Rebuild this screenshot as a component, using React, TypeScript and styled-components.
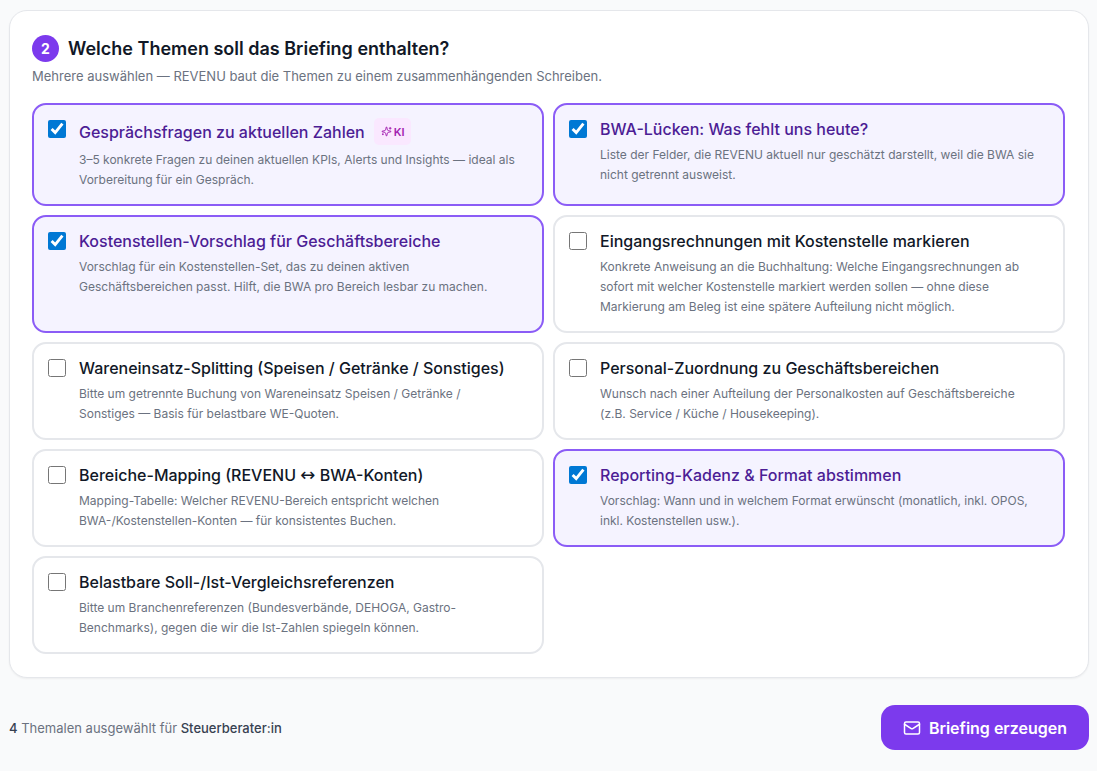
import React, { Fragment, useState } from "react";
import styled, { createGlobalStyle } from "styled-components";

const GlobalStyle = createGlobalStyle`
  *, *::before, *::after { box-sizing: border-box; }
  body {
    margin: 0;
    background: #f9fafb;
    color: #111827;
    font-family: Inter, "Liberation Sans", sans-serif;
  }
`;

const Page = styled.main`
  padding: 10px 8px 21px 9px;
`;

const Panel = styled.section`
  padding: 24px 23px 23px 22px;
  background: #ffffff;
  border: 1px solid #e5e7eb;
  border-radius: 18px;
  box-shadow: 0 1px 2px rgba(0, 0, 0, 0.05);
`;

const PanelHeader = styled.div`
  display: flex;
  align-items: center;
  gap: 9px;
`;

const StepNumber = styled.span`
  display: flex;
  align-items: center;
  justify-content: center;
  width: 27px;
  height: 27px;
  border-radius: 50%;
  background: #7c3aed;
  color: #ffffff;
  font-size: 14px;
  font-weight: 700;
`;

const PanelTitle = styled.h2`
  margin: 0;
  font-size: 18px;
  line-height: 26px;
  font-weight: 600;
`;

const PanelHint = styled.p`
  margin: 4px 0 17px;
  color: #6b7280;
  font-size: 13px;
  line-height: 20px;
`;

const TopicGrid = styled.div`
  display: grid;
  grid-template-columns: repeat(2, minmax(0, 1fr));
  gap: 9px;
`;

const TopicCard = styled.label<{ $selected: boolean }>`
  display: flex;
  align-items: flex-start;
  gap: 13px;
  padding: 13px 14px 14px;
  border: 2px solid ${(p) => (p.$selected ? "#8b5cf6" : "#e5e7eb")};
  border-radius: 14px;
  background: ${(p) => (p.$selected ? "#f5f3ff" : "#ffffff")};
  cursor: pointer;
`;

const Checkbox = styled.input`
  flex: none;
  width: 18px;
  height: 18px;
  margin: 2px 0 0;
  accent-color: #0078d4;
`;

const TopicBody = styled.div`
  flex: 1;
  min-width: 0;
`;

const TopicTitle = styled.div<{ $selected: boolean }>`
  display: flex;
  align-items: center;
  gap: 9px;
  font-size: 16px;
  line-height: 22px;
  font-weight: 500;
  color: ${(p) => (p.$selected ? "#4c1d95" : "#111827")};
`;

const Arrow = styled.span`
  font-family: "DejaVu Sans", sans-serif;
  font-size: 18px;
  font-weight: 400;
  line-height: 1;
`;

const TopicText = styled.p`
  margin: 5px 0 0;
  padding-right: 12px;
  color: #6b7280;
  font-size: 12px;
  line-height: 20px;
`;

const AiBadge = styled.span`
  display: flex;
  align-items: center;
  gap: 2px;
  height: 27px;
  padding: 0 6px 0 7px;
  border-radius: 5px;
  background: #fae8ff;
  color: #a21caf;
  font-size: 11px;
  font-weight: 600;
`;

const Footer = styled.footer`
  display: flex;
  align-items: center;
  justify-content: space-between;
  margin-top: 27px;
`;

const Summary = styled.p`
  margin: 0;
  color: #6b7280;
  font-size: 13px;
  line-height: 20px;
`;

const Strong = styled.strong`
  color: #374151;
  font-weight: 500;
`;

const SubmitButton = styled.button`
  display: flex;
  align-items: center;
  gap: 8px;
  height: 45px;
  padding: 0 22px;
  border: 0;
  border-radius: 14px;
  background: #7c3aed;
  color: #ffffff;
  font: 600 16px/24px Inter, "Liberation Sans", sans-serif;
  cursor: pointer;
`;

const SparkIcon = () => (
  <svg width="11" height="11" viewBox="0 0 24 24" fill="none" stroke="currentColor" strokeWidth="2" strokeLinecap="round" strokeLinejoin="round" aria-hidden="true">
    <path d="M9.937 15.5A2 2 0 0 0 8.5 14.063l-6.135-1.582a.5.5 0 0 1 0-.962L8.5 9.936A2 2 0 0 0 9.937 8.5l1.582-6.135a.5.5 0 0 1 .963 0L14.063 8.5A2 2 0 0 0 15.5 9.937l6.135 1.581a.5.5 0 0 1 0 .964L15.5 14.063a2 2 0 0 0-1.437 1.437l-1.582 6.135a.5.5 0 0 1-.963 0z" />
    <path d="M20 3v4M22 5h-4M4 17v2M5 18H3" />
  </svg>
);

const MailIcon = () => (
  <svg width="18" height="18" viewBox="0 0 24 24" fill="none" stroke="currentColor" strokeWidth="2" strokeLinecap="round" strokeLinejoin="round" aria-hidden="true">
    <rect x="2" y="4" width="20" height="16" rx="2" />
    <path d="m22 7-8.97 5.7a1.94 1.94 0 0 1-2.06 0L2 7" />
  </svg>
);

interface Topic {
  id: string;
  title: string;
  text: string;
  ai?: boolean;
}

const topics: Topic[] = [
  { id: "fragen", title: "Gesprächsfragen zu aktuellen Zahlen", text: "3–5 konkrete Fragen zu deinen aktuellen KPIs, Alerts und Insights — ideal als Vorbereitung für ein Gespräch.", ai: true },
  { id: "luecken", title: "BWA-Lücken: Was fehlt uns heute?", text: "Liste der Felder, die REVENU aktuell nur geschätzt darstellt, weil die BWA sie nicht getrennt ausweist." },
  { id: "kostenstellen", title: "Kostenstellen-Vorschlag für Geschäftsbereiche", text: "Vorschlag für ein Kostenstellen-Set, das zu deinen aktiven Geschäftsbereichen passt. Hilft, die BWA pro Bereich lesbar zu machen." },
  { id: "eingang", title: "Eingangsrechnungen mit Kostenstelle markieren", text: "Konkrete Anweisung an die Buchhaltung: Welche Eingangsrechnungen ab sofort mit welcher Kostenstelle markiert werden sollen — ohne diese Markierung am Beleg ist eine spätere Aufteilung nicht möglich." },
  { id: "splitting", title: "Wareneinsatz-Splitting (Speisen / Getränke / Sonstiges)", text: "Bitte um getrennte Buchung von Wareneinsatz Speisen / Getränke / Sonstiges — Basis für belastbare WE-Quoten." },
  { id: "personal", title: "Personal-Zuordnung zu Geschäftsbereichen", text: "Wunsch nach einer Aufteilung der Personalkosten auf Geschäftsbereiche (z.B. Service / Küche / Housekeeping)." },
  { id: "mapping", title: "Bereiche-Mapping (REVENU ↔ BWA-Konten)", text: "Mapping-Tabelle: Welcher REVENU-Bereich entspricht welchen BWA-/Kostenstellen-Konten — für konsistentes Buchen." },
  { id: "reporting", title: "Reporting-Kadenz & Format abstimmen", text: "Vorschlag: Wann und in welchem Format erwünscht (monatlich, inkl. OPOS, inkl. Kostenstellen usw.)." },
  { id: "referenzen", title: "Belastbare Soll-/Ist-Vergleichsreferenzen", text: "Bitte um Branchenreferenzen (Bundesverbände, DEHOGA, Gastro-Benchmarks), gegen die wir die Ist-Zahlen spiegeln können." },
];

/* Sets the double arrow in a font whose arrow is narrower than Inter's. */
const TitleText = ({ title }: { title: string }) => (
  <span>
    {title.split("↔").map((part, i) => (
      <Fragment key={i}>
        {i > 0 && <Arrow>↔</Arrow>}
        {part}
      </Fragment>
    ))}
  </span>
);

export default function App() {
  const [selected, setSelected] = useState<string[]>(["fragen", "luecken", "kostenstellen", "reporting"]);
  const toggle = (id: string) =>
    setSelected((s) => (s.includes(id) ? s.filter((x) => x !== id) : [...s, id]));

  return (
    <>
      <GlobalStyle />
      <Page>
        <Panel>
          <PanelHeader>
            <StepNumber>2</StepNumber>
            <PanelTitle>Welche Themen soll das Briefing enthalten?</PanelTitle>
          </PanelHeader>
          <PanelHint>Mehrere auswählen — REVENU baut die Themen zu einem zusammenhängenden Schreiben.</PanelHint>
          <TopicGrid>
            {topics.map((t) => {
              const on = selected.includes(t.id);
              return (
                <TopicCard key={t.id} htmlFor={t.id} $selected={on}>
                  <Checkbox id={t.id} type="checkbox" checked={on} onChange={() => toggle(t.id)} />
                  <TopicBody>
                    <TopicTitle $selected={on}>
                      <TitleText title={t.title} />
                      {t.ai && (
                        <AiBadge>
                          <SparkIcon />
                          KI
                        </AiBadge>
                      )}
                    </TopicTitle>
                    <TopicText>{t.text}</TopicText>
                  </TopicBody>
                </TopicCard>
              );
            })}
          </TopicGrid>
        </Panel>
        <Footer>
          <Summary>
            <Strong>{selected.length}</Strong> Themalen ausgewählt für <Strong>Steuerberater:in</Strong>
          </Summary>
          <SubmitButton type="button">
            <MailIcon />
            Briefing erzeugen
          </SubmitButton>
        </Footer>
      </Page>
    </>
  );
}
